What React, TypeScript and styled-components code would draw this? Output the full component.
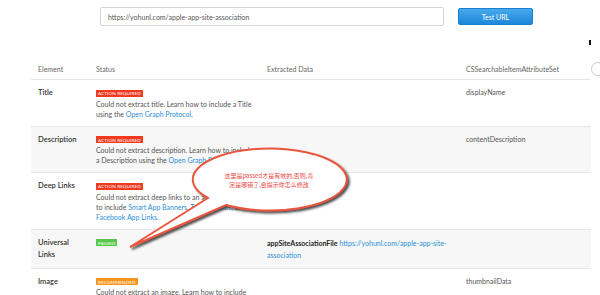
import styled, { createGlobalStyle } from "styled-components";

const GlobalStyle = createGlobalStyle`
  html, body {
    margin: 0;
    padding: 0;
    background: #fff;
    overflow: hidden;
  }
  body {
    font-family: Lato, "Liberation Sans", "Noto Sans CJK SC", sans-serif;
    color: #555;
  }
`;

const Page = styled.div`
  position: relative;
  width: 600px;
  height: 295px;
  overflow: hidden;
`;

const TopBar = styled.div`
  display: flex;
  align-items: center;
  gap: 14px;
  padding: 7px 0 0 100px;
`;

const UrlInput = styled.div`
  box-sizing: border-box;
  width: 344px;
  height: 19px;
  border: 1px solid #d4d4d4;
  border-radius: 2px;
  padding: 0 7px;
  display: flex;
  align-items: center;
  font-size: 7px;
  color: #555;
`;

const TestButton = styled.button`
  width: 75px;
  height: 17px;
  border: 1px solid #1a7fcf;
  border-radius: 2px;
  background: linear-gradient(#45a9ec, #1d87d9);
  color: #fff;
  font-family: inherit;
  font-size: 7px;
  padding: 0;
`;

const MarkRow = styled.div`
  height: 32px;
  display: flex;
  justify-content: flex-end;
  padding: 14px 9px 0 0;
  box-sizing: border-box;
`;

const Mark = styled.span`
  width: 2px;
  height: 5px;
  background: #111;
`;

const Table = styled.div`
  margin-left: 31px;
  width: 560px;
`;

const Grid = styled.div<{ $shade?: boolean }>`
  display: grid;
  grid-template-columns: 58px 171px 199px 132px;
  background: ${(p) => (p.$shade ? "#f7f7f7" : "#fff")};
  border-bottom: 1px solid #e6e6e6;
`;

const HeadRow = styled(Grid)`
  height: 22px;
  align-items: center;
  box-sizing: border-box;
`;

const HeadCell = styled.div`
  padding-left: 7px;
  font-size: 7px;
  color: #666;
  display: flex;
  justify-content: space-between;
  align-items: center;
`;

const RoundButton = styled.span`
  width: 14px;
  height: 14px;
  border: 1px solid #ccc;
  border-radius: 50%;
  margin-right: -14px;
  box-sizing: border-box;
`;

const Cell = styled.div`
  padding: 7px 6px 7px 7px;
  font-size: 7px;
  line-height: 10px;
  white-space: nowrap;
`;

const Label = styled(Cell)`
  font-size: 7.5px;
  line-height: 12px;
  font-weight: 600;
  color: #333;
`;

const DataCell = styled(Cell)`
  line-height: 12px;
  font-size: 7px;
  padding-top: 7px;
`;

const Badge = styled.span<{ $tone: "red" | "green" | "orange" }>`
  display: inline-flex;
  align-items: center;
  height: 7px;
  margin: 2px 0 2px;
  padding: 0 2px;
  font-size: 4.6px;
  letter-spacing: 0.1px;
  text-transform: uppercase;
  color: #fff;
  background: ${(p) =>
    p.$tone === "red" ? "#f0391f" : p.$tone === "green" ? "#59c84a" : "#f7941d"};
`;

const Text = styled.div``;

const Link = styled.a`
  color: #2b8fd6;
  text-decoration: none;
`;

const Strong = styled.b`
  color: #222;
  font-weight: 700;
`;

const Overlay = styled.svg`
  position: absolute;
  left: 0;
  top: 0;
  pointer-events: none;
`;

const BubbleText = styled.div`
  position: absolute;
  left: 200px;
  top: 172px;
  width: 138px;
  text-align: center;
  font-family: "Noto Sans CJK SC", sans-serif;
  font-size: 6px;
  line-height: 8.5px;
  color: #e8453c;
`;

export default function App() {
  return (
    <Page>
      <GlobalStyle />
      <TopBar>
        <UrlInput>https://yohunl.com/apple-app-site-association</UrlInput>
        <TestButton>Test URL</TestButton>
      </TopBar>
      <MarkRow>
        <Mark />
      </MarkRow>
      <Table>
        <HeadRow>
          <HeadCell>Element</HeadCell>
          <HeadCell>Status</HeadCell>
          <HeadCell>Extracted Data</HeadCell>
          <HeadCell>
            CSSearchableItemAttributeSet
            <RoundButton />
          </HeadCell>
        </HeadRow>

        <Grid>
          <Label>Title</Label>
          <Cell>
            <Badge $tone="red">Action Required</Badge>
            <Text>
              Could not extract title. Learn how to include a Title
              <br />
              using the <Link>Open Graph Protocol</Link>.
            </Text>
          </Cell>
          <Cell />
          <Cell>displayName</Cell>
        </Grid>

        <Grid $shade>
          <Label>Description</Label>
          <Cell>
            <Badge $tone="red">Action Required</Badge>
            <Text>
              Could not extract description. Learn how to include
              <br />
              a Description using the <Link>Open Graph Protocol</Link>.
            </Text>
          </Cell>
          <Cell />
          <Cell>contentDescription</Cell>
        </Grid>

        <Grid>
          <Label>Deep Links</Label>
          <Cell>
            <Badge $tone="red">Action Required</Badge>
            <Text>
              Could not extract deep links to an app. Learn how
              <br />
              to include <Link>Smart App Banners</Link>, <Link>Twitter Cards</Link>, and
              <br />
              <Link>Facebook App Links</Link>.
            </Text>
          </Cell>
          <Cell />
          <Cell />
        </Grid>

        <Grid $shade>
          <Label>
            Universal
            <br />
            Links
          </Label>
          <Cell>
            <Badge $tone="green">Passed</Badge>
          </Cell>
          <DataCell>
            <Strong>appSiteAssociationFile</Strong>{" "}
            <Link>https://yohunl.com/apple-app-site-</Link>
            <br />
            <Link>association</Link>
          </DataCell>
          <Cell />
        </Grid>

        <Grid>
          <Label>Image</Label>
          <Cell>
            <Badge $tone="orange">Recommended</Badge>
            <Text>Could not extract an image. Learn how to include</Text>
          </Cell>
          <Cell />
          <Cell>thumbnailData</Cell>
        </Grid>
      </Table>

      <Overlay width="600" height="295" viewBox="0 0 600 295">
        <defs>
          <filter id="shade" x="-20%" y="-20%" width="140%" height="160%">
            <feDropShadow dx="2" dy="2" stdDeviation="1.2" floodColor="#333" floodOpacity="0.85" />
          </filter>
        </defs>
        <path
          d="M 208 198 L 130 247 L 226 205 A 77 31 0 1 0 208 198 Z"
          fill="#fff"
          stroke="#e9573f"
          strokeWidth="2"
          strokeLinejoin="miter"
          filter="url(#shade)"
        />
      </Overlay>
      <BubbleText>
        这里是passed才是有效的,否则,肯
        <br />
        定是哪错了,会提示你怎么修改
      </BubbleText>
    </Page>
  );
}
